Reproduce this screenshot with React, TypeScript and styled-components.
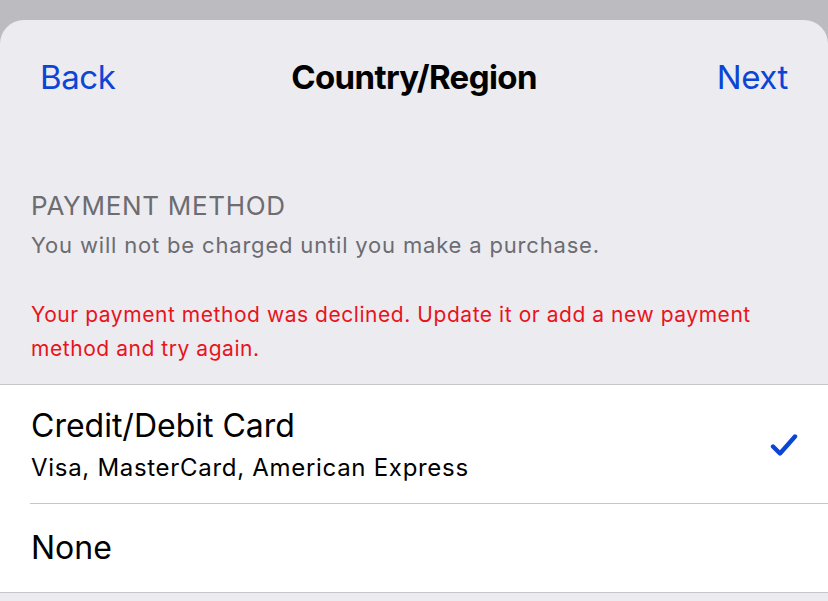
import React from "react";
import styled, { createGlobalStyle } from "styled-components";

const Global = createGlobalStyle`
  html, body { margin: 0; padding: 0; background: #bcbbc0; }
  body { font-family: Inter, "Noto Sans", "Liberation Sans", sans-serif; -webkit-font-smoothing: antialiased; }
  * { box-sizing: border-box; }
`;

const Screen = styled.div`
  width: 828px;
  height: 601px;
  overflow: hidden;
  background: #bcbbc0;
  padding-top: 20px;
`;

const Sheet = styled.div`
  background: #ebebf0;
  border-radius: 24px 24px 0 0;
  height: 581px;
  display: flex;
  flex-direction: column;
`;

const NavBar = styled.div`
  display: grid;
  grid-template-columns: 1fr auto 1fr;
  align-items: center;
  height: 112px;
  padding: 2px 40px 0 40px;
`;

const NavButton = styled.button<{ $align: "left" | "right" }>`
  justify-self: ${(p) => (p.$align === "left" ? "start" : "end")};
  background: none;
  border: 0;
  padding: 0;
  font-family: inherit;
  font-size: 33px;
  color: #0b45d6;
  letter-spacing: -0.4px;
  cursor: pointer;
`;

const Title = styled.h1`
  margin: 0;
  font-size: 33px;
  font-weight: 700;
  color: #000;
  letter-spacing: -0.6px;
`;

const SectionHeader = styled.div`
  padding: 59px 31px 0 31px;
  display: flex;
  flex-direction: column;
`;

const HeaderLabel = styled.div`
  font-size: 26px;
  line-height: 30px;
  color: #6c6c71;
  letter-spacing: 0.7px;
`;

const HeaderNote = styled.div`
  font-size: 22px;
  line-height: 30px;
  margin-top: 9px;
  color: #6c6c71;
  letter-spacing: 0.82px;
`;

const ErrorNote = styled.div`
  font-size: 21px;
  line-height: 34px;
  margin-top: 38px;
  color: #e8141b;
  letter-spacing: 0.55px;
  padding-right: 40px;
  padding-bottom: 18px;
`;

const List = styled.div`
  background: #fff;
  border-top: 1px solid #c6c6c8;
  border-bottom: 1px solid #c6c6c8;
`;

const Row = styled.div<{ $height: number; $divider?: boolean }>`
  position: relative;
  height: ${(p) => p.$height}px;
  display: flex;
  align-items: center;
  padding: 0 30px 0 31px;
  ${(p) =>
    p.$divider
      ? `&::after { content: ""; position: absolute; left: 30px; right: 0; bottom: 0; height: 1px; background: #c6c6c8; }`
      : ""}
`;

const RowText = styled.div`
  flex: 1;
  display: flex;
  flex-direction: column;
`;

const RowTitle = styled.div`
  font-size: 32px;
  line-height: 38px;
  color: #000;
  letter-spacing: 0;
`;

const RowSubtitle = styled.div`
  font-size: 24px;
  line-height: 30px;
  margin-top: 8px;
  color: #000;
  letter-spacing: 0.7px;
`;

const Check = () => (
  <svg width="28" height="24" viewBox="0 0 28 24">
    <path d="M3 13.5 L10 20.5 L25 3.5" fill="none" stroke="#0b45d6" strokeWidth="4.4" strokeLinecap="round" strokeLinejoin="round" />
  </svg>
);

export default function App() {
  return (
    <>
      <Global />
      <Screen>
        <Sheet>
          <NavBar>
            <NavButton $align="left">Back</NavButton>
            <Title>Country/Region</Title>
            <NavButton $align="right">Next</NavButton>
          </NavBar>
          <SectionHeader>
            <HeaderLabel>PAYMENT METHOD</HeaderLabel>
            <HeaderNote>You will not be charged until you make a purchase.</HeaderNote>
            <ErrorNote>
              Your payment method was declined. Update it or add a new payment method and try again.
            </ErrorNote>
          </SectionHeader>
          <List>
            <Row $height={119} $divider>
              <RowText>
                <RowTitle>Credit/Debit Card</RowTitle>
                <RowSubtitle>Visa, MasterCard, American Express</RowSubtitle>
              </RowText>
              <Check />
            </Row>
            <Row $height={88}>
              <RowText>
                <RowTitle>None</RowTitle>
              </RowText>
            </Row>
          </List>
        </Sheet>
      </Screen>
    </>
  );
}
